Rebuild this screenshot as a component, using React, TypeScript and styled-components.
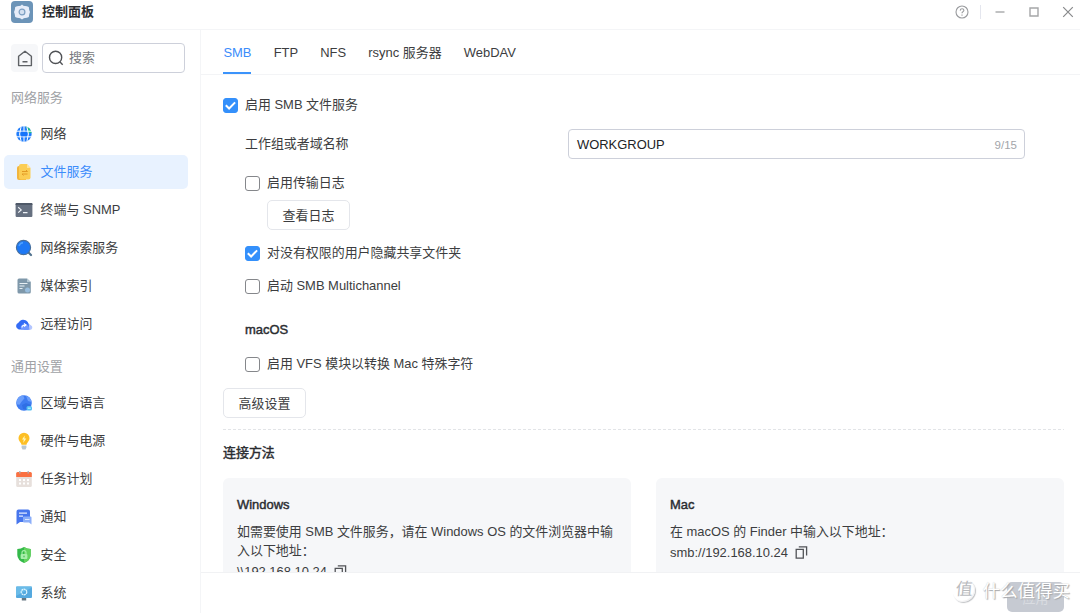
import React from "react";
import styled, { createGlobalStyle } from "styled-components";

const GlobalStyle = createGlobalStyle`
  * { box-sizing: border-box; }
  body {
    margin: 0;
    background: #fff;
    color: #3c3d40;
    font: 12.95px/20px "Liberation Sans", "Noto Sans CJK SC", sans-serif;
    overflow: hidden;
  }
`;

const Window = styled.div`
  display: flex;
  flex-direction: column;
  width: 1080px;
  height: 613px;
  overflow: hidden;
  position: relative;
`;

const TitleBar = styled.header`
  display: flex;
  align-items: center;
  height: 30px;
  flex: none;
  padding: 0 5px 5px 11px;
  border-bottom: 1px solid #f4f5f7;
`;

const AppTitle = styled.h1`
  flex: 1;
  margin: 0 0 0 9px;
  font-size: 13px;
  font-weight: 700;
  color: #2b2d31;
`;

const WindowControls = styled.div`
  display: flex;
  align-items: center;
`;

const ControlDivider = styled.span`
  width: 1px;
  height: 14px;
  margin: 0 12px 0 11px;
  background: #e4e6ee;
`;

const ControlButton = styled.span<{ $gap?: number }>`
  display: flex;
  width: 14px;
  height: 14px;
  margin-right: ${(p) => p.$gap ?? 0}px;
`;

const Body = styled.div`
  display: flex;
  flex: 1;
  min-height: 0;
`;

const Sidebar = styled.nav`
  width: 201px;
  flex: none;
  padding: 13px 12px 0 4px;
  border-right: 1px solid #f4f5f7;
  overflow: hidden;
`;

const SearchRow = styled.div`
  display: flex;
  align-items: center;
  gap: 4px;
  height: 30px;
  padding-left: 7px;
`;

const HomeButton = styled.div`
  display: flex;
  align-items: center;
  justify-content: center;
  width: 27px;
  height: 28px;
  border-radius: 4px;
  background: #f6f7f9;
`;

const SearchBox = styled.div`
  display: flex;
  align-items: center;
  gap: 5px;
  width: 143px;
  height: 30px;
  padding-left: 5px;
  border: 1px solid #cdd0da;
  border-radius: 4px;
  color: #777a80;
`;

const GroupLabel = styled.div<{ $top: number }>`
  height: 20px;
  margin: ${(p) => p.$top}px 0 10px;
  padding-left: 7px;
  line-height: 21px;
  color: #a0a2a6;
`;

const NavList = styled.div`
  display: flex;
  flex-direction: column;
  gap: 4px;
`;

const NavItem = styled.div<{ $active?: boolean }>`
  display: flex;
  align-items: center;
  gap: 7.6px;
  height: 34px;
  padding-left: 11px;
  border-radius: 5px;
  background: ${(p) => (p.$active ? "#e8f2ff" : "transparent")};
  color: ${(p) => (p.$active ? "#3b8cfb" : "#3c3d40")};
`;

const Main = styled.main`
  display: flex;
  flex: 1;
  flex-direction: column;
  min-width: 0;
`;

const Tabs = styled.div`
  display: flex;
  flex: none;
  gap: 22.2px;
  height: 45px;
  padding-left: 22.4px;
  border-bottom: 1px solid #f3f4f6;
`;

const Tab = styled.div<{ $active?: boolean }>`
  height: 44px;
  padding-top: 13px;
  border-bottom: 2px solid ${(p) => (p.$active ? "#3b93fb" : "transparent")};
  color: ${(p) => (p.$active ? "#3b8cfb" : "#3c3d40")};
`;

const Content = styled.div`
  flex: 1;
  min-height: 0;
  padding: 20px 16px 0 22px;
  overflow: hidden;
`;

const Row = styled.div<{ $top?: number; $indent?: number }>`
  display: flex;
  align-items: center;
  height: 20px;
  margin-top: ${(p) => p.$top ?? 0}px;
  padding-left: ${(p) => p.$indent ?? 0}px;
`;

const FieldRow = styled(Row)`
  height: 30px;
`;

const FieldLabel = styled.label`
  width: 323px;
  line-height: 22px;
`;

const CheckLabel = styled.label`
  line-height: 22px;
`;

const TextField = styled.div`
  display: flex;
  align-items: center;
  justify-content: space-between;
  width: 457px;
  height: 30px;
  padding: 1px 7px 0 8px;
  border: 1px solid #cdd0da;
  border-radius: 4px;
  color: #222326;
`;

const Counter = styled.span`
  font-size: 11.5px;
  color: #a3a5aa;
`;

const Box = styled.span<{ $on?: boolean }>`
  display: flex;
  flex: none;
  width: 15px;
  height: 15px;
  margin-right: 7px;
  border: 1px solid ${(p) => (p.$on ? "#3490fb" : "#85878b")};
  border-radius: 3px;
  background: ${(p) => (p.$on ? "#3490fb" : "#fff")};
`;

const Button = styled.div<{ $top: number; $left?: number }>`
  display: flex;
  align-items: center;
  justify-content: center;
  width: 83px;
  height: 30px;
  padding-top: 1px;
  margin: ${(p) => p.$top}px 0 0 ${(p) => p.$left ?? 0}px;
  border: 1px solid #e4e6eb;
  border-radius: 5px;
`;

const Heading = styled.div<{ $top?: number; $left?: number }>`
  height: 20px;
  margin: ${(p) => p.$top ?? 0}px 0 0 ${(p) => p.$left ?? 0}px;
  line-height: 21px;
  color: #2b2d31;
  -webkit-text-stroke: 0.45px #2b2d31;
`;

const Separator = styled.div`
  height: 1px;
  margin-top: 11px;
  background: repeating-linear-gradient(90deg, #e2e4e7 0 3px, transparent 3px 5px);
`;

const Cards = styled.div`
  display: grid;
  grid-template-columns: 1fr 1fr;
  gap: 25px;
  height: 140px;
  margin-top: 16px;
`;

const Card = styled.section`
  padding: 16px 14px;
  border-radius: 6px;
  background: #f6f7f9;
`;

const CardText = styled.p`
  margin: 8px 0 2px;
  line-height: 19px;
`;

const Address = styled.div`
  display: flex;
  align-items: center;
  gap: 7px;

  svg {
    margin-bottom: 2px;
  }
`;

const Footer = styled.footer`
  display: flex;
  flex: none;
  justify-content: flex-end;
  height: 41px;
  padding: 9px 16px 0 0;
  border-top: 1px solid #f1f2f4;
`;

const ApplyButton = styled.div`
  width: 57px;
  height: 30px;
  border-radius: 5px;
  background: #c6cad2;
  color: #d9dce1;
  line-height: 34px;
  text-align: center;
`;

const Watermark = styled.div`
  position: absolute;
  right: 10px;
  bottom: 9px;
  display: flex;
  align-items: center;
  gap: 8px;
  height: 26px;
  color: #fff;
  font-size: 17.5px;
  line-height: 26px;
  text-shadow: 1px 1px 1px #a4a6a9, 0 0 1px #c4c6c9;
`;

const WatermarkSeal = styled.span`
  width: 22px;
  height: 22px;
  border-radius: 50%;
  box-shadow: 1px 1px 1px #c0c2c5, inset -1px -1px 1px #f0f0f1;
  color: #b9bbbe;
  font-size: 17px;
  line-height: 20px;
  text-align: center;
  text-shadow: none;
  transform: skewX(-5deg);
`;

const AppLogo = () => (
  <svg width="22" height="22" viewBox="0 0 22 22">
    <rect width="22" height="22" rx="4" fill="#6c94b8" />
    <path d="M8.2 5.1Q9.6 5 11 3.4Q12.4 5 13.8 5.1Q15.8 5 17.8 6Q17.9 8.6 19 11Q17.9 13.4 17.8 16Q15.8 17 13.8 16.900Q12.400 17 11 18.600Q9.600 17 8.200 16.900Q6.200 17 4.200 16Q4.100 13.400 3 11Q4.100 8.600 4.200 6Q6.200 5 8.200 5.100Z" fill="#e7edf9" />
    <circle cx="11" cy="11" r="2.9" fill="#d4e0f0" stroke="#7d9fc2" strokeWidth="1.2" />
  </svg>
);

const HomeIcon = () => (
  <svg width="16" height="17" viewBox="0 0 16 17" fill="none" stroke="#5e6165" strokeWidth="1.4" strokeLinejoin="round">
    <path d="M1.600 6.300 8 1.200l6.400 5.100v9.300H1.600zM5.500 11.800h5" />
  </svg>
);

const SearchIcon = () => (
  <svg width="16" height="16" viewBox="0 0 16 16" fill="none" stroke="#505256" strokeWidth="1.4">
    <circle cx="7.6" cy="7.4" r="6.1" />
    <path d="m12 12 2.700 2.700" />
  </svg>
);

const Check = () => (
  <svg width="13" height="13" viewBox="0 0 13 13" fill="none" stroke="#fff" strokeWidth="2">
    <path d="m1.800 6.200 3.300 3.300 6-6.100" />
  </svg>
);

const CopyIcon = () => (
  <svg width="13" height="13" viewBox="0 0 13 13" fill="none" stroke="#515357" strokeWidth="1.3">
    <path d="M1.200 3.400h7.100v8.800H1.200zM3.800.9h7.800v8.700" />
  </svg>
);

const iconShapes: Record<string, React.ReactNode> = {
  network: (
    <>
      <circle cx="9" cy="9" r="7.7" fill="#207dfb" />
      <path d="M10.500 1.400A7.700 7.700 0 0 1 16.600 8h-3.200Q13 4 10.500 1.400Z" fill="#20bd86" />
      <path d="M1 6.200h16M1 11.800h16M9 1v16M6.100 1.600q-3 7.400 0 14.800M11.900 1.600q3 7.400 0 14.800" stroke="#fff" strokeWidth="1" fill="none" />
      <path d="M6.200 6.800h5.600v4.500H6.200z" fill="#1674fa" />
    </>
  ),
  file: (
    <>
      <path d="M2 5q0-2 2-2h7v14H4q-2 0-2-2Z" fill="#f2b53d" />
      <path d="M4 3q0-2 2-2h6l3.500 4v9.500q0 2-2 2H6q-2 0-2-2Z" fill="#fbcd54" />
      <path d="M12 1 15.500 5H12z" fill="#ffe29b" />
      <path d="M7 8.500h5.500L11 7M12.500 11H7l1.500 1.500" stroke="#e29a24" fill="none" />
    </>
  ),
  terminal: (
    <>
      <rect x=".6" y="2" width="16.800" height="14" rx="1" fill="#667080" />
      <path d="M.6 3q0-1 1-1h14.800q1 0 1 1v1H.6Z" fill="#4f5968" />
      <path d="m3.200 6.200 3 2.700-3 2.700M8 11.700h4.500" stroke="#edf1f6" strokeWidth="1.2" fill="none" />
    </>
  ),
  explore: (
    <>
      <path d="m13 13 3 3" stroke="#52738f" strokeWidth="2.2" strokeLinecap="round" />
      <circle cx="8.500" cy="8.500" r="7.100" fill="#1e78f4" stroke="#476f9b" strokeWidth="1.1" />
      <path d="M4 7q1-3 4-3.200" stroke="#4fa2ff" strokeWidth="1.4" fill="none" />
    </>
  ),
  media: (
    <>
      <path d="M2.500 3q0-1.500 1.500-1.500h8L15.800 5v10q0 1.500-1.500 1.500H4q-1.500 0-1.500-1.500Z" fill="#7f98aa" />
      <path d="M12 1.500V5h3.800z" fill="#b7cad6" />
      <path d="M4.500 6.500h8M4.500 9h5M4.500 11.500h3" stroke="#e7eff4" strokeWidth="1.2" />
      <circle cx="12.500" cy="13" r="2.500" fill="#98bddd" />
    </>
  ),
  remote: (
    <>
      <path d="M9 15a4 4 0 0 1 0-6 5 5 0 0 1 6.500 1q2.200 1 1.800 3-.5 2-2.800 2Z" fill="#b4c6ff" />
      <path d="M3.800 14.500a3.500 3.500 0 0 1-.4-6.700A5.500 5.500 0 0 1 12.700 7q2 3 .8 7.500Z" fill="#346cf5" />
      <path d="M6 14.500q-1.500-4.500 3-5.500 5-.5 5.500 5.500Z" fill="#7197ff" />
      <path d="M7 12.500q0-2.500 3.500-2.500M9 8.300l2 1.700-2 1.700" stroke="#fff" strokeWidth="1.1" fill="none" />
    </>
  ),
  region: (
    <>
      <circle cx="9" cy="9" r="7.800" fill="#3d7cf1" />
      <path d="M2 6Q4 1.500 8 1.200l1.500 3-3 3.500-2 3-3-.5ZM11 1.800Q16 3.500 16.700 8L13 7Z" fill="#6c9ffb" />
      <path d="M7 11l4-2 5 2-4 5-4-1Z" fill="#2f6fe5" />
      <rect x="11.500" y="12" width="5.500" height="4.500" rx="1.500" fill="#51bdf3" />
      <path d="M12.800 14.200h3" stroke="#c5f2ff" />
    </>
  ),
  hardware: (
    <>
      <path d="M6.500 12.800Q6.300 11.300 5 10A5.500 5.500 0 1 1 13 10Q11.700 11.300 11.500 12.800Z" fill="#fdbf25" />
      <path d="M9.800 3.500 7 7.500h1.800L8.200 11 11.300 6.500H9.400Z" fill="#fff7bc" />
      <path d="M6.600 13.500h4.800v2L10.500 17.500h-3l-.9-2Z" fill="#b9c7d0" />
    </>
  ),
  tasks: (
    <>
      <rect x="1.200" y="2" width="15.600" height="15" rx="1.500" fill="#e7e0dc" />
      <path d="M1.200 7V3.500Q1.200 2 2.700 2h12.600q1.500 0 1.500 1.500V7Z" fill="#fa7041" />
      <path d="M4.800 1v2.500M13.200 1v2.500" stroke="#aab1b8" strokeWidth="1.3" />
      <path d="M4 10h2m2 0h2m2 0h2M4 13.500h2m2 0h2m2 0h2" stroke="#fff" strokeWidth="1.8" />
    </>
  ),
  notice: (
    <>
      <path d="M1.500 3.500q0-2 2-2H13q2 0 2 2V14H5l-3.500 2.500Z" fill="#4776ed" />
      <path d="M4 5.200h8M4 8.200h4" stroke="#e4ecff" strokeWidth="1.3" />
      <path d="M9 8.500h6.500q1 0 1 1v7L14 14.500H9q-1 0-1-1v-4q0-1 1-1Z" fill="#8baef9" />
      <path d="M10 11.500h4.500" stroke="#dce8ff" />
    </>
  ),
  security: (
    <>
      <path d="M9 1q3 2 6.700 2v6q0 5-6.700 8-6.700-3-6.700-8V3Q6 3 9 1Z" fill="#34b94a" />
      <path d="M9 1q3 2 6.700 2v6q0 5-6.700 8Z" fill="#62d25d" />
      <rect x="5.600" y="8" width="6.800" height="5" rx="1" fill="#a8efaa" />
      <path d="M7 8V6.600a2 2 0 0 1 4 0V8" stroke="#a8efaa" strokeWidth="1.1" fill="none" />
      <path d="M9 9.700v1.600" stroke="#35aa49" />
    </>
  ),
  system: (
    <>
      <rect x="1" y="2.500" width="16" height="11.500" rx="1" fill="#55a9df" />
      <path d="M2 2.500h14q1 0 1 1L1 12V3.500q0-1 1-1Z" fill="#6abbe8" />
      <circle cx="9" cy="8" r="2.800" fill="none" stroke="#e0f6ff" strokeWidth="1.2" strokeDasharray="2 .5" />
      <path d="M6.800 14h4.400v2.500H6.800Z" fill="#667782" />
    </>
  ),
};

const NavIcon = ({ name }: { name: string }) => (
  <svg width="18" height="18" viewBox="0 0 18 18">
    {iconShapes[name]}
  </svg>
);

const networkItems = [
  ["network", "网络"],
  ["file", "文件服务"],
  ["terminal", "终端与 SNMP"],
  ["explore", "网络探索服务"],
  ["media", "媒体索引"],
  ["remote", "远程访问"],
];

const generalItems = [
  ["region", "区域与语言"],
  ["hardware", "硬件与电源"],
  ["tasks", "任务计划"],
  ["notice", "通知"],
  ["security", "安全"],
  ["system", "系统"],
];

const Nav = ({ items }: { items: string[][] }) => (
  <NavList>
    {items.map(([icon, label]) => (
      <NavItem key={icon} $active={icon === "file"}>
        <NavIcon name={icon} />
        {label}
      </NavItem>
    ))}
  </NavList>
);

const CheckRow = ({ label, on, top, indent }: { label: string; on?: boolean; top?: number; indent?: number }) => (
  <Row $top={top} $indent={indent}>
    <Box $on={on}>{on && <Check />}</Box>
    <CheckLabel>{label}</CheckLabel>
  </Row>
);

export default function App() {
  return (
    <Window>
      <GlobalStyle />
      <TitleBar>
        <AppLogo />
        <AppTitle>控制面板</AppTitle>
        <WindowControls>
          <ControlButton>
            <svg width="14" height="14" viewBox="0 0 14 14" fill="none" stroke="#999b9e" strokeWidth="1.1">
              <circle cx="7" cy="7" r="6" />
              <path d="M5.200 5.600q.1-1.900 1.900-1.900 1.800 0 1.800 1.600 0 .9-1 1.500-.9.500-.9 1.500M7 9.500v1.200" />
            </svg>
          </ControlButton>
          <ControlDivider />
          <ControlButton $gap={20}>
            <svg width="14" height="14" viewBox="0 0 14 14" stroke="#a0a1a3" strokeWidth="1.3">
              <path d="M2.500 7h9" />
            </svg>
          </ControlButton>
          <ControlButton $gap={20}>
            <svg width="14" height="14" viewBox="0 0 14 14" fill="none" stroke="#a5a6a8" strokeWidth="1.4">
              <path d="M3 3h8v8H3z" />
            </svg>
          </ControlButton>
          <ControlButton>
            <svg width="14" height="14" viewBox="0 0 14 14" stroke="#88898b" strokeWidth="1.2">
              <path d="m2.200 2.200 9.600 9.600m0-9.600-9.600 9.600" />
            </svg>
          </ControlButton>
        </WindowControls>
      </TitleBar>
      <Body>
        <Sidebar>
          <SearchRow>
            <HomeButton>
              <HomeIcon />
            </HomeButton>
            <SearchBox>
              <SearchIcon />
              搜索
            </SearchBox>
          </SearchRow>
          <GroupLabel $top={14}>网络服务</GroupLabel>
          <Nav items={networkItems} />
          <GroupLabel $top={15}>通用设置</GroupLabel>
          <Nav items={generalItems} />
        </Sidebar>
        <Main>
          <Tabs>
            <Tab $active>SMB</Tab>
            <Tab>FTP</Tab>
            <Tab>NFS</Tab>
            <Tab>rsync 服务器</Tab>
            <Tab>WebDAV</Tab>
          </Tabs>
          <Content>
            <CheckRow on label="启用 SMB 文件服务" />
            <FieldRow $top={14} $indent={22}>
              <FieldLabel>工作组或者域名称</FieldLabel>
              <TextField>
                WORKGROUP
                <Counter>9/15</Counter>
              </TextField>
            </FieldRow>
            <CheckRow top={14} indent={22} label="启用传输日志" />
            <Button $top={7} $left={44}>查看日志</Button>
            <CheckRow on top={13} indent={22} label="对没有权限的用户隐藏共享文件夹" />
            <CheckRow top={13} indent={22} label="启动 SMB Multichannel" />
            <Heading $top={23} $left={22}>macOS</Heading>
            <CheckRow top={15} indent={22} label="启用 VFS 模块以转换 Mac 特殊字符" />
            <Button $top={14}>高级设置</Button>
            <Separator />
            <Heading $top={12}>连接方法</Heading>
            <Cards>
              <Card>
                <Heading>Windows</Heading>
                <CardText>如需要使用 SMB 文件服务，请在 Windows OS 的文件浏览器中输入以下地址：</CardText>
                <Address>
                  {"\\\\192.168.10.24"}
                  <CopyIcon />
                </Address>
              </Card>
              <Card>
                <Heading>Mac</Heading>
                <CardText>在 macOS 的 Finder 中输入以下地址：</CardText>
                <Address>
                  smb://192.168.10.24
                  <CopyIcon />
                </Address>
              </Card>
            </Cards>
          </Content>
          <Footer>
            <ApplyButton>应用</ApplyButton>
          </Footer>
        </Main>
      </Body>
      <Watermark>
        <WatermarkSeal>值</WatermarkSeal>
        什么值得买
      </Watermark>
    </Window>
  );
}
